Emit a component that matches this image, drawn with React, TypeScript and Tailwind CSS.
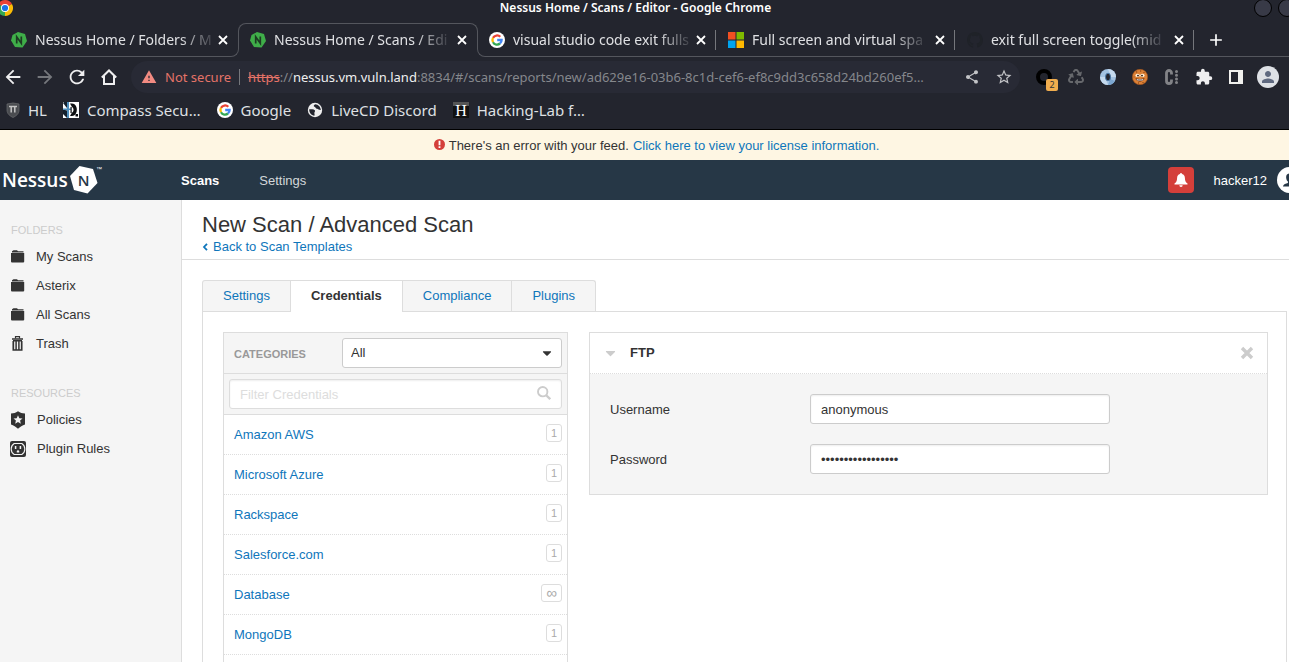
import React from "react";
import { FaCaretDown, FaRecycle } from "react-icons/fa";
import {
  MdArrowBack,
  MdArrowForward,
  MdRefresh,
  MdWarning,
  MdShare,
  MdStarBorder,
  MdExtension,
  MdPerson,
  MdAdd,
} from "react-icons/md";

function NessusFavicon() {
  return (
    <svg viewBox="0 0 16 16" className="size-4 shrink-0" aria-hidden="true">
      <path d="M7 0 L14 2 L16 9 L11.500 15.500 L4 15 L0 8.500 L1.500 3 Z" fill="#3fae49" />
      <path d="M5.700 11.500 V4.800 L10.300 11.300 V4.600" fill="none" stroke="#1d3b22" strokeWidth="1.700" />
    </svg>
  );
}

function GoogleIcon() {
  return (
    <svg viewBox="0 0 16 16" className="size-4 shrink-0" aria-hidden="true">
      <circle cx="8" cy="8" r="8" fill="#fff" />
      <g fill="none" strokeWidth="2.300">
        <path d="M11.300 4.800 A4.600 4.600 0 0 0 4 5.900" stroke="#ea4335" />
        <path d="M4 5.900 A4.600 4.600 0 0 0 4 10.200" stroke="#fbbc05" />
        <path d="M4 10.200 A4.600 4.600 0 0 0 11 11.500" stroke="#34a853" />
        <path d="M11 11.500 A4.600 4.600 0 0 0 12.600 8 H8.200" stroke="#4285f4" />
      </g>
    </svg>
  );
}

function MicrosoftIcon() {
  return (
    <svg viewBox="0 0 16 16" className="size-4 shrink-0" aria-hidden="true">
      <path d="M0 0h7.500v7.500H0z" fill="#f25022" />
      <path d="M8.500 0H16v7.500H8.500z" fill="#7fba00" />
      <path d="M0 8.500h7.500V16H0z" fill="#00a4ef" />
      <path d="M8.500 8.500H16V16H8.500z" fill="#ffb900" />
    </svg>
  );
}

function GithubIcon() {
  return (
    <svg viewBox="0 0 16 16" className="size-4 shrink-0" aria-hidden="true">
      <path
        fill="#1f2228"
        d="M8 0C3.580 0 0 3.580 0 8c0 3.540 2.290 6.530 5.470 7.590.4.070.55-.17.55-.38v-1.490c-2.010.37-2.530-.49-2.690-.94-.09-.23-.48-.94-.82-1.130-.28-.15-.68-.52-.01-.53.63-.01 1.080.58 1.230.82.72 1.210 1.870.87 2.330.66.07-.52.28-.87.51-1.070-1.780-.2-3.640-.89-3.640-3.950 0-.87.31-1.590.82-2.150-.08-.2-.36-1.020.08-2.120 0 0 .67-.21 2.200.82a7.600 7.600 0 0 1 4 0c1.530-1.040 2.200-.82 2.200-.82.44 1.100.16 1.920.08 2.120.51.56.82 1.270.82 2.150 0 3.070-1.870 3.750-3.650 3.950.29.25.54.73.54 1.480v2.200c0 .21.15.46.55.38A8 8 0 0 0 16 8c0-4.420-3.580-8-8-8z"
      />
    </svg>
  );
}

function ChromeIcon() {
  return (
    <svg viewBox="0 0 16 16" className="-ml-[3px] size-4 shrink-0" aria-hidden="true">
      <path d="M8 8 L1.070 4 A8 8 0 0 1 14.930 4 Z" fill="#ea4335" />
      <path d="M8 8 L14.930 4 A8 8 0 0 1 8 16 Z" fill="#fbbc05" />
      <path d="M8 8 L8 16 A8 8 0 0 1 1.070 4 Z" fill="#34a853" />
      <circle cx="8" cy="8" r="4" fill="#fff" />
      <circle cx="8" cy="8" r="3.100" fill="#1a73e8" />
    </svg>
  );
}

function TabBody({ icon, title }: { icon: React.ReactNode; title: string }) {
  return (
    <>
      {icon}
      <span className="flex w-[188px] shrink-0 pl-2 text-sm whitespace-nowrap">
        <span className="[mask-image:linear-gradient(to_right,black_82%,rgb(0_0_0/0.15))]">{title}</span>
      </span>
      <button type="button" aria-label={`Close ${title}`} className="shrink-0 text-white">
        <svg viewBox="0 0 16 16" className="size-4" stroke="currentColor" strokeWidth="1.800">
          <path d="M4 4l8 8M12 4l-8 8" />
        </svg>
      </button>
    </>
  );
}

function ShieldBookmark() {
  return (
    <svg viewBox="0 0 14 16" className="h-4 w-3.5" aria-hidden="true">
      <path d="M1 2 L7 1 L13 2 V8 C13 12 10 14 7 15.500 C4 14 1 12 1 8 Z" fill="#4a4c50" stroke="#6b6d70" strokeWidth=".7" />
      <path d="M3 4.500h8M5.200 5v5.500M8.800 5v5.500" stroke="#c4c4c4" strokeWidth="1.500" fill="none" />
    </svg>
  );
}

function CompassBookmark() {
  return (
    <svg viewBox="0 0 16 16" className="size-4" aria-hidden="true">
      <path d="M0 0h16v16H0z" fill="#fff" />
      <path d="M4 16L0 12V7.500l4 1z" fill="#15202c" />
      <path d="M0 1l4 5V0H1z" fill="#15202c" />
      <path d="M7 1.500h2c6.500 0 6.500 12.500 0 12.500H7l2-3.500c2-.5 2-4.500 0-5.500z" fill="#0d0f12" />
      <path d="M4 0h2v16H4zM0 6.500h8V8H0z" fill="#4f8fbd" />
      <path d="M7.500 5h1.200v6H7.500z" fill="#0d0f12" />
      <path d="M12.500 12H15v2.500h-2.500z" fill="#0d0f12" />
    </svg>
  );
}

function GlobeBookmark() {
  return (
    <svg viewBox="0 0 16 16" className="size-4" aria-hidden="true">
      <circle cx="8" cy="8" r="7.200" fill="#eee" />
      <path
        d="M2.200 7.200c2.300.2 4.300-.3 5.600 1.100 1 1.100-.8 2-.4 3.200.2.600.3 1.200 0 2.200-3-.4-5.300-3-5.200-6.500zM8.200 2.200c-1.900.9-1.700 2.200-.6 2.600 1 .4 1 1.800 2.400 2 1.300.200 1.600 1.200 3.800 1.200-.1-3-2.400-5.600-5.600-5.800z"
        fill="#23252e"
      />
    </svg>
  );
}

function HBookmark() {
  return (
    <svg viewBox="0 0 16 16" className="size-4" aria-hidden="true">
      <path d="M0 0h16v16H0z" fill="#111" />
      <path d="M0 0h16v4H0z" fill="#555" />
      <text x="8" y="13.500" textAnchor="middle" fontSize="16" fill="#fff" fontFamily="Liberation Serif, serif">
        H
      </text>
    </svg>
  );
}

const bookmarks = [
  { label: "HL", icon: <ShieldBookmark /> },
  { label: "Compass Secu…", icon: <CompassBookmark /> },
  { label: "Google", icon: <GoogleIcon /> },
  { label: "LiveCD Discord", icon: <GlobeBookmark /> },
  { label: "Hacking-Lab f…", icon: <HBookmark /> },
];

function Browser() {
  const tool = "flex size-8 shrink-0 items-center justify-center";
  const divider = "ml-1.5 h-5 w-px bg-[#75777c]";
  return (
    <div className="shrink-0 border-b border-black bg-[#23252e] font-['Noto_Sans',sans-serif] text-[#dfe0e3]">
      <div className="flex h-[23px] items-start overflow-hidden">
        <ChromeIcon />
        <h2 className="flex-1 pl-1 text-center text-xs leading-4 font-semibold text-white">
          Nessus Home / Scans / Editor - Google Chrome
        </h2>
        <div className="flex w-[35px] shrink-0 gap-1.5 overflow-hidden">
          <span className="-mt-px size-[18px] shrink-0 rounded-full border border-black bg-[#383a47]" />
          <span className="-mt-px size-[18px] shrink-0 rounded-full border border-black bg-[#383a47]" />
        </div>
      </div>

      <div className="flex h-[34px] overflow-hidden">
        <div className="flex w-[231px] shrink-0 items-center border-b border-[#54565d] pl-[11px]">
          <TabBody icon={<NessusFavicon />} title="Nessus Home / Folders / M" />
        </div>
        <div className="h-2 w-2 shrink-0 self-end rounded-br-lg border-r border-b border-[#54565d]" />
        <div className="-ml-px mb-2 flex w-60 shrink-0 items-start rounded-t-lg border-x border-t border-[#54565d] pl-[11px]">
          <div className="flex h-8 items-center">
            <TabBody icon={<NessusFavicon />} title="Nessus Home / Scans / Edi" />
          </div>
        </div>
        <div className="-ml-px h-2 w-2 shrink-0 self-end rounded-bl-lg border-b border-l border-[#54565d]" />
        <div className="flex flex-1 items-center border-b border-[#54565d] pl-1">
          <div className="flex w-[239px] shrink-0 items-center">
            <TabBody icon={<GoogleIcon />} title="visual studio code exit fulls" />
            <span className={divider} />
          </div>
          <div className="flex w-[239px] shrink-0 items-center">
            <TabBody icon={<MicrosoftIcon />} title="Full screen and virtual spa" />
            <span className={divider} />
          </div>
          <div className="flex w-[239px] shrink-0 items-center">
            <TabBody icon={<GithubIcon />} title="exit full screen toggle(mid" />
            <span className={divider} />
          </div>
          <button type="button" aria-label="New tab" className="text-white">
            <MdAdd className="size-5" />
          </button>
        </div>
      </div>

      <div className="flex h-10 items-center pr-[5px]">
        <div className="-ml-[3px] flex shrink-0 text-[#efeff0]">
          <button type="button" aria-label="Back" className={tool}>
            <MdArrowBack className="size-[22px]" />
          </button>
          <button type="button" aria-label="Forward" className={tool}>
            <MdArrowForward className="size-[22px] text-[#75777c]" />
          </button>
          <button type="button" aria-label="Reload" className={tool}>
            <MdRefresh className="size-[22px]" />
          </button>
          <button type="button" aria-label="Home" className={tool}>
            <svg viewBox="0 0 16 16" className="size-4" fill="none" stroke="currentColor" strokeWidth="2">
              <path d="M.8 8.500L8 1.500l7.200 7M3 7v8h10V7" />
            </svg>
          </button>
        </div>
        <div className="ml-1.5 flex h-8 min-w-0 flex-1 items-center rounded-full bg-[#282a35] pl-2.5 text-[13px]">
          <MdWarning className="size-4 shrink-0 text-[#f28b82]" />
          <span className="ml-2 shrink-0 text-[#e57368]">Not secure</span>
          <span className="mx-2 h-4 w-px shrink-0 bg-[#75777c]" />
          <span className="min-w-0 flex-1 whitespace-nowrap text-[#85878c]">
            <span className="text-[#e57368] line-through">https</span>://<span className="text-[#efeff0]">nessus.vm.vuln.land</span>
            :8834/#/scans/reports/new/ad629e16-03b6-8c1d-cef6-ef8c9dd3c658d24bd260ef5…
          </span>
          <button type="button" aria-label="Share" className={tool}>
            <MdShare className="size-4 text-[#c2c3c6]" />
          </button>
          <button type="button" aria-label="Bookmark" className={tool}>
            <MdStarBorder className="size-[18px] text-[#c2c3c6]" />
          </button>
        </div>
        <div className="ml-2 flex shrink-0 items-center">
          <button type="button" aria-label="Extension, 2 items" className={`${tool} relative`}>
            <span className="size-4 rounded-full border-4 border-black" />
            <span className="absolute right-0.5 bottom-0.5 size-3 rounded-xs bg-[#f0ad4e] text-center text-[9px] leading-3 text-[#333]">2</span>
          </button>
          <button type="button" aria-label="Recycle" className={tool}>
            <FaRecycle className="size-4 text-[#66686c]" />
          </button>
          <button type="button" aria-label="Ring" className={tool}>
            <svg viewBox="0 0 16 16" className="size-4">
              <circle cx="8" cy="8" r="8" fill="#a3c3e2" />
              <path d="M8 0a8 8 0 0 1 8 8l-5 0z" fill="#c5daee" />
              <path d="M8 16a8 8 0 0 1-8-8l5 0z" fill="#c5daee" />
              <path d="M8 16a8 8 0 0 0 7-4l-5-2z" fill="#7ba6d0" />
              <ellipse cx="8" cy="8" rx="2.500" ry="3.800" fill="#23252e" stroke="#4c7aa8" strokeWidth="1" />
            </svg>
          </button>
          <button type="button" aria-label="Cookies" className={tool}>
            <svg viewBox="0 0 16 16" className="size-4">
              <circle cx="8" cy="8" r="7.700" fill="#dc8136" stroke="#9c4f1a" strokeWidth=".6" />
              <ellipse cx="5.600" cy="6.400" rx="2.200" ry="1.600" fill="#fff0d8" />
              <ellipse cx="10.400" cy="6.400" rx="2.200" ry="1.600" fill="#fff0d8" />
              <circle cx="6" cy="6.600" r=".9" fill="#2a1206" />
              <circle cx="10" cy="6.600" r=".9" fill="#2a1206" />
              <path d="M3.500 9.300c3 1 6 1 9 0-.8 4.200-8.200 4.200-9 0z" fill="#4b1e08" />
              <path d="M4.500 9.900c2.500.7 4.500.7 7 0l-.5 1.300c-2 .5-4 .5-6 0z" fill="#fff" />
              <path d="M4 3h1.200M8 2h1.200M11.500 3.500h1M1.600 8h.8M6 14h1M10.500 13.500h1" stroke="#7a3a10" strokeWidth="1" />
            </svg>
          </button>
          <button type="button" aria-label="Cookie editor" className={tool}>
            <svg viewBox="0 0 16 16" className="size-4" fill="none" stroke="#828387">
              <path d="M7.500 5.500V4a2.500 2.500 0 0 0-5 0v8a2.500 2.500 0 0 0 5 0v-1.500" strokeWidth="2.800" />
              <path d="M12.500 2.500v.01M12.500 6.200v.01M12.500 9.900v.01M12.500 13.500v.01" strokeWidth="3" strokeLinecap="round" />
            </svg>
          </button>
          <button type="button" aria-label="Extensions" className={tool}>
            <MdExtension className="size-[18px] text-[#efeff0]" />
          </button>
          <button type="button" aria-label="Side panel" className={tool}>
            <svg viewBox="0 0 14 14" className="size-3.5">
              <path d="M0 0h14v14H0zM2 2v10h7V2z" fill="#f1f1ee" fillRule="evenodd" />
            </svg>
          </button>
          <button type="button" aria-label="Profile" className={tool}>
            <span className="flex size-[22px] items-center justify-center rounded-full bg-[#dee1e6]">
              <MdPerson className="size-[18px] text-[#5f6980]" />
            </span>
          </button>
        </div>
      </div>

      <nav aria-label="Bookmarks" className="flex h-8 items-start gap-4 pt-px pl-1.5 text-[15px] leading-6">
        {bookmarks.map((b) => (
          <a key={b.label} href="#" className="flex items-center gap-2">
            {b.icon}
            {b.label}
          </a>
        ))}
      </nav>
    </div>
  );
}

function FolderIcon() {
  return (
    <svg viewBox="0 0 14 13" className="h-[13px] w-3.5" fill="#333" aria-hidden="true">
      <path d="M1 1.200 L2.500 .2 H6 L7 1.200 H12.500 V2.400 H1z" />
      <path d="M0 3h13.200V11.500a1 1 0 0 1-1 1H1a1 1 0 0 1-1-1z" />
    </svg>
  );
}

function TrashIcon() {
  return (
    <svg viewBox="0 0 14 15" className="h-[15px] w-3.5" fill="none" stroke="#333" aria-hidden="true">
      <path d="M4.500 2.500V.7h4v1.800" strokeWidth="1.200" />
      <path d="M1 3h11" strokeWidth="1.500" />
      <path d="M2.300 5v9h8.400V5" strokeWidth="1.700" />
      <path d="M5.100 5v9M7.900 5v9M2 4.800h9" strokeWidth="1.500" />
    </svg>
  );
}

function PolicyIcon() {
  return (
    <svg viewBox="0 0 16 18" className="h-[18px] w-4" aria-hidden="true">
      <path d="M1 2.500 C4 2.500 5.500 1.500 8 .2 C10.500 1.500 12 2.500 15 2.500 V13.500 C12.500 14 10 16 8 17.800 C6 16 3.500 14 1 13.500z" fill="#333" />
      <path d="M8 4.300l1.300 2.900 3.200.3-2.400 2.100.7 3.100L8 11.100l-2.800 1.600.7-3.100-2.400-2.100 3.200-.3z" fill="#f4f4f4" />
    </svg>
  );
}

function PluginIcon() {
  return (
    <svg viewBox="0 0 16 16" className="size-4" aria-hidden="true">
      <rect width="16" height="16" rx="2" fill="#333" />
      <path d="M4.200 2.500h7.600a6.500 6.500 0 0 1 0 11H4.200a6.500 6.500 0 0 1 0-11z" fill="none" stroke="#f4f4f4" strokeWidth="1.100" />
      <path d="M5.600 5v3M10.400 5v3" stroke="#f4f4f4" strokeWidth="1.500" />
      <path d="M6.800 11.500v-1a1.200 1.200 0 0 1 2.400 0v1z" fill="#f4f4f4" />
    </svg>
  );
}

const folders = [
  { label: "My Scans", icon: <FolderIcon /> },
  { label: "Asterix", icon: <FolderIcon /> },
  { label: "All Scans", icon: <FolderIcon /> },
  { label: "Trash", icon: <TrashIcon /> },
];

const resources = [
  { label: "Policies", icon: <PolicyIcon /> },
  { label: "Plugin Rules", icon: <PluginIcon /> },
];

const credentials = [
  { label: "Amazon AWS", count: "1" },
  { label: "Microsoft Azure", count: "1" },
  { label: "Rackspace", count: "1" },
  { label: "Salesforce.com", count: "1" },
  { label: "Database", count: "∞" },
  { label: "MongoDB", count: "1" },
];

function Header() {
  return (
    <header className="flex h-10 shrink-0 items-center overflow-hidden bg-[#263746] text-[13px] text-white">
      <a href="#" aria-label="Nessus" className="flex w-[181px] shrink-0 items-center pl-0.5">
        <span className="w-[67px] font-['Open_Sans',sans-serif] text-[19px] leading-6 font-semibold">Nessus</span>
        <svg viewBox="0 0 34 30" className="h-[30px] w-[34px] shrink-0" aria-hidden="true">
          <path d="M10.500 1 L24 4 L28.500 18 L18.500 28.500 L5 25 L1 11 Z" fill="#fff" />
          <text x="14.500" y="21" textAnchor="middle" fontSize="15" fontWeight="600" fill="#263746" fontFamily="Open Sans, sans-serif">
            N
          </text>
          <text x="27" y="6" fontSize="6" fill="#fff" fontFamily="Liberation Sans, sans-serif">
            ™
          </text>
        </svg>
      </a>
      <nav className="flex flex-1 items-center gap-10 pt-px">
        <a href="#" className="font-bold">Scans</a>
        <a href="#" className="text-[#d3d7da]">Settings</a>
      </nav>
      <button type="button" aria-label="Notifications" className="flex size-[26px] items-center justify-center rounded-sm bg-[#d43f3a]">
        <svg viewBox="0 0 14 14" className="size-3.5" fill="#fff">
          <path d="M7 0a1 1 0 0 1 1 1c2 .5 2.800 2 2.900 4 .1 2.700.6 4 2.600 5.500V11.500H.5V10.500C2.500 9 3 7.700 3.100 5 3.200 3 4 1.500 6 1a1 1 0 0 1 1-1zM5.300 12.200h3.400a1.700 1.700 0 0 1-3.400 0z" />
        </svg>
      </button>
      <a href="#" className="ml-5 pt-px">hacker12</a>
      <span className="ml-2.5 flex w-3 shrink-0 overflow-hidden">
        <svg viewBox="0 0 26 26" className="size-[26px] shrink-0" aria-hidden="true">
          <circle cx="13" cy="13" r="13" fill="#fff" />
          <path d="M13 6.500c-3.500 0-4.200 2.500-3.700 5 .2 1.500.9 2.500 1.600 3v1.600c-2 .6-4.500 1-5 3.400h14.200c-.5-2.400-3-2.800-5-3.400v-1.600c.7-.5 1.400-1.500 1.600-3 .5-2.500-.2-5-3.700-5z" fill="#263746" />
        </svg>
      </span>
    </header>
  );
}

function Sidebar() {
  const heading = "text-[11px] leading-5 text-[#ccc]";
  return (
    <aside className="w-[182px] shrink-0 border-r border-[#ddd] bg-[#f5f5f5] pt-5 pl-[11px]">
      <h2 className={heading}>FOLDERS</h2>
      <ul className="pt-0.5">
        {folders.map((f) => (
          <li key={f.label}>
            <a href="#" className="flex h-[29px] items-center gap-[11px]">
              {f.icon}
              {f.label}
            </a>
          </li>
        ))}
      </ul>
      <h2 className={`mt-[25px] ${heading}`}>RESOURCES</h2>
      <ul className="-ml-px pt-0.5">
        {resources.map((r) => (
          <li key={r.label}>
            <a href="#" className="flex h-[29px] items-center gap-[11px]">
              {r.icon}
              {r.label}
            </a>
          </li>
        ))}
      </ul>
    </aside>
  );
}

function Categories() {
  return (
    <section className="flex w-[345px] shrink-0 flex-col border-x border-t border-[#ddd]">
      <div className="flex h-[41px] shrink-0 items-center border-b border-[#ddd] bg-[#f5f5f5] pr-[5px] pl-2.5">
        <label htmlFor="category" className="flex-1 pt-0.5 text-[11px] font-bold text-[#999]">CATEGORIES</label>
        <div className="relative w-[220px]">
          <select id="category" className="h-[30px] w-full appearance-none rounded-[3px] border border-[#ccc] bg-white px-2">
            <option>All</option>
          </select>
          <FaCaretDown className="pointer-events-none absolute top-2 right-2 size-3.5" />
        </div>
      </div>
      <div className="relative shrink-0 border-b border-[#ddd] bg-[#f5f5f5] p-[5px]">
        <input
          type="text"
          aria-label="Filter Credentials"
          placeholder="Filter Credentials"
          className="h-[30px] w-full rounded-[3px] border border-[#ddd] bg-white px-2.5 shadow-[inset_0_1px_2px_#eee] placeholder:text-[#ddd]"
        />
        <svg viewBox="0 0 14 14" className="absolute top-3 right-4 size-3.5" fill="none" stroke="#ccc" aria-hidden="true">
          <circle cx="5.700" cy="5.700" r="4.700" strokeWidth="1.900" />
          <path d="M9.200 9.200l4 4" strokeWidth="2.300" />
        </svg>
      </div>
      <ul>
        {credentials.map((c) => (
          <li key={c.label} className="flex h-10 items-center justify-between border-b border-dotted border-[#ddd] pr-[5px] pl-2.5">
            <a href="#" className="text-[#0f76bb]">{c.label}</a>
            <span className="mb-1 flex h-[18px] items-center rounded-[3px] border border-[#ddd] px-1 text-[11px] text-[#aaa]">
              {c.count === "∞" ? <span className="text-[15px] leading-4">∞</span> : c.count}
            </span>
          </li>
        ))}
      </ul>
    </section>
  );
}

function FtpPanel() {
  const field = "h-[30px] w-[300px] rounded-[3px] border border-[#ccc] bg-white px-2.5 shadow-[inset_0_1px_2px_#eee]";
  return (
    <section className="min-w-0 flex-1 self-start border border-[#ddd]">
      <div className="flex h-[41px] items-center border-b border-dotted border-[#ddd] px-[15px]">
        <button type="button" aria-label="Collapse FTP" className="text-[#ccc]">
          <FaCaretDown className="h-4 w-[11px]" />
        </button>
        <h2 className="ml-3.5 flex-1 font-bold">FTP</h2>
        <button type="button" aria-label="Remove FTP" className="-mr-[3px]">
          <svg viewBox="0 0 16 16" className="size-4" stroke="#ccc" strokeWidth="3.400">
            <path d="M3 3l10 10M13 3L3 13" />
          </svg>
        </button>
      </div>
      <form className="flex flex-col gap-5 bg-[#f5f5f5] p-5">
        <div className="flex items-center">
          <label htmlFor="username" className="w-[200px] pt-px">Username</label>
          <input id="username" type="text" defaultValue="anonymous" className={field} />
        </div>
        <div className="flex items-center">
          <label htmlFor="password" className="w-[200px] pt-px">Password</label>
          <input id="password" type="password" defaultValue="anonymous@local.c" className={field} />
        </div>
      </form>
    </section>
  );
}

export default function App() {
  const tab = "flex h-[31px] items-center border-t border-r border-[#ddd] bg-[#f5f5f5] px-5 text-[#0f76bb]";
  return (
    <div className="flex h-screen flex-col overflow-hidden bg-white font-['Liberation_Sans',Arial,sans-serif] text-[13px] leading-5 text-[#333]">
      <Browser />
      <div className="flex h-[30px] shrink-0 items-center justify-center gap-1 bg-[#fef6e3] pt-px pl-6">
        <span className="flex items-center gap-1">
          <svg viewBox="0 0 12 12" className="mb-0.5 size-[11px]" aria-hidden="true">
            <circle cx="6" cy="6" r="6" fill="#d43f3a" />
            <path d="M6 2v4.800M6 8v1.900" stroke="#fff" strokeWidth="2" />
          </svg>
          There's an error with your feed.
        </span>
        <a href="#" className="text-[#0f76bb]">Click here to view your license information.</a>
      </div>
      <Header />
      <div className="flex min-h-0 flex-1">
        <Sidebar />
        <main className="flex min-w-0 flex-1 flex-col">
          <div className="shrink-0 border-b border-[#ddd] pt-3 pb-0.5 pl-5">
            <h1 className="text-[22px] leading-[25px]">New Scan / Advanced Scan</h1>
            <a href="#" className="flex items-center gap-1 text-[#0f76bb]">
              <svg viewBox="0 0 7 8" className="h-2 w-[7px]" fill="none" stroke="#0f76bb" strokeWidth="1.800" aria-hidden="true">
                <path d="M5 .8L2 4l3 3.200" />
              </svg>
              Back to Scan Templates
            </a>
          </div>
          <div className="flex min-h-0 flex-1 flex-col pt-5 pr-0.5 pl-5">
            <nav aria-label="Scan sections" className="z-10 flex">
              <a href="#" className={`${tab} rounded-tl-[3px] border-l`}>Settings</a>
              <a href="#" className="-mb-px flex h-8 items-center border-t border-r border-[#ddd] bg-white px-5 pb-px font-bold">Credentials</a>
              <a href="#" className={tab}>Compliance</a>
              <a href="#" className={`${tab} rounded-tr-[3px]`}>Plugins</a>
            </nav>
            <div className="flex min-h-0 flex-1 gap-[21px] border-x border-t border-[#ddd] pt-5 pr-[18px] pl-5">
              <Categories />
              <FtpPanel />
            </div>
          </div>
        </main>
      </div>
    </div>
  );
}
